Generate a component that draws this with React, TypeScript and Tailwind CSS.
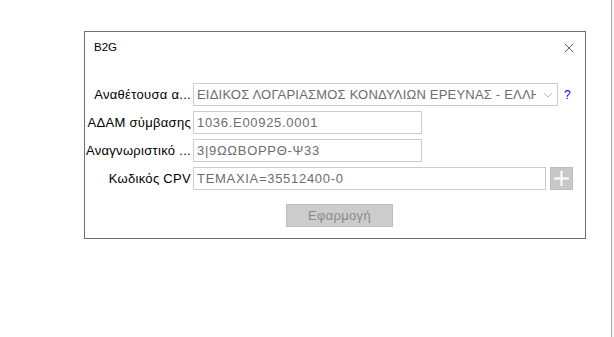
import { X } from 'lucide-react';

const FONT = "font-['Liberation_Sans',Arial,sans-serif]";

function Field({ value, width }: { value: string; width: string }) {
  return (
    <div
      className={`${width} h-[23px] border border-[#cdcdcd] bg-white px-[3px] flex items-center text-[13px] tracking-[0.7px] text-[#6d6d6d] whitespace-nowrap overflow-hidden`}
    >
      {value}
    </div>
  );
}

export default function App() {
  return (
    <div className={`${FONT} flex h-[337px] w-[614px] bg-white overflow-hidden`}>
      <div className="flex-1 pl-[84px] pt-[31px]">
        {/* Dialog */}
        <div className="w-[502px] h-[208px] border border-[#6e6e6e] bg-white flex flex-col">
          {/* Title bar */}
          <div className="h-[30px] flex items-center justify-between pl-[9px] pr-[8px] pt-[1px]">
            <span className="text-[11.5px] text-black">B2G</span>
            <X size={16} strokeWidth={1.1} className="text-[#222]" />
          </div>

          <div className="mt-[21px] flex flex-col gap-[5px]">
            <div className="flex items-center">
              <span className="w-[106px] text-right text-[13px] tracking-[0.3px] text-black whitespace-nowrap">Αναθέτουσα α...</span>
              <div className="ml-[2px] w-[365px] h-[23px] border border-[#cdcdcd] bg-white pl-[3px] pr-[4px] flex items-center overflow-hidden">
                <span className="flex-1 min-w-0 overflow-hidden whitespace-nowrap text-[13px] tracking-[0.2px] text-[#6d6d6d]">
                  ΕΙΔΙΚΟΣ ΛΟΓΑΡΙΑΣΜΟΣ ΚΟΝΔΥΛΙΩΝ ΕΡΕΥΝΑΣ - ΕΛΛΗΝΙΚΟ
                </span>
                <svg width="10" height="6" viewBox="0 0 10 6" className="ml-[7px] shrink-0">
                  <path d="M1 1 L5 5 L9 1" fill="none" stroke="#b8b8b8" strokeWidth="1" />
                </svg>
              </div>
              <span className="ml-[6px] text-[12px] text-[#0000ff]">?</span>
            </div>

            <div className="flex items-center">
              <span className="w-[106px] text-right text-[13px] tracking-[0.3px] text-black whitespace-nowrap">ΑΔΑΜ σύμβασης</span>
              <div className="ml-[2px]">
                <Field value="1036.E00925.0001" width="w-[229px]" />
              </div>
            </div>

            <div className="flex items-center">
              <span className="w-[106px] text-right text-[13px] tracking-[0.3px] text-black whitespace-nowrap">Αναγνωριστικό ...</span>
              <div className="ml-[2px]">
                <Field value="3|9ΩΩΒΟΡΡΘ-Ψ33" width="w-[229px]" />
              </div>
            </div>

            <div className="flex items-center">
              <span className="w-[106px] text-right text-[13px] tracking-[0.3px] text-black whitespace-nowrap">Κωδικός CPV</span>
              <div className="ml-[2px]">
                <Field value="ΤΕΜΑΧΙΑ=35512400-0" width="w-[353px]" />
              </div>
              <div className="ml-[4px] w-[23px] h-[23px] bg-[#c8c8c8] border border-[#bdbdbd] flex items-center justify-center">
                <svg width="15" height="15" viewBox="0 0 15 15">
                  <path d="M7.5 0 V15 M0 7.5 H15" stroke="#ffffff" strokeWidth="2" />
                </svg>
              </div>
            </div>
          </div>

          <div className="mt-[14px] ml-[201px]">
            <div className="w-[107px] h-[23px] bg-[#cccccc] border border-[#bfbfbf] flex items-center justify-center text-[13px] tracking-[0.3px] text-[#8a8a8a]">
              Εφαρμογή
            </div>
          </div>
        </div>
      </div>
      <div className="w-[3px] h-full border-l border-[#a3a7ab] bg-[#f6f6f8]" />
    </div>
  );
}
